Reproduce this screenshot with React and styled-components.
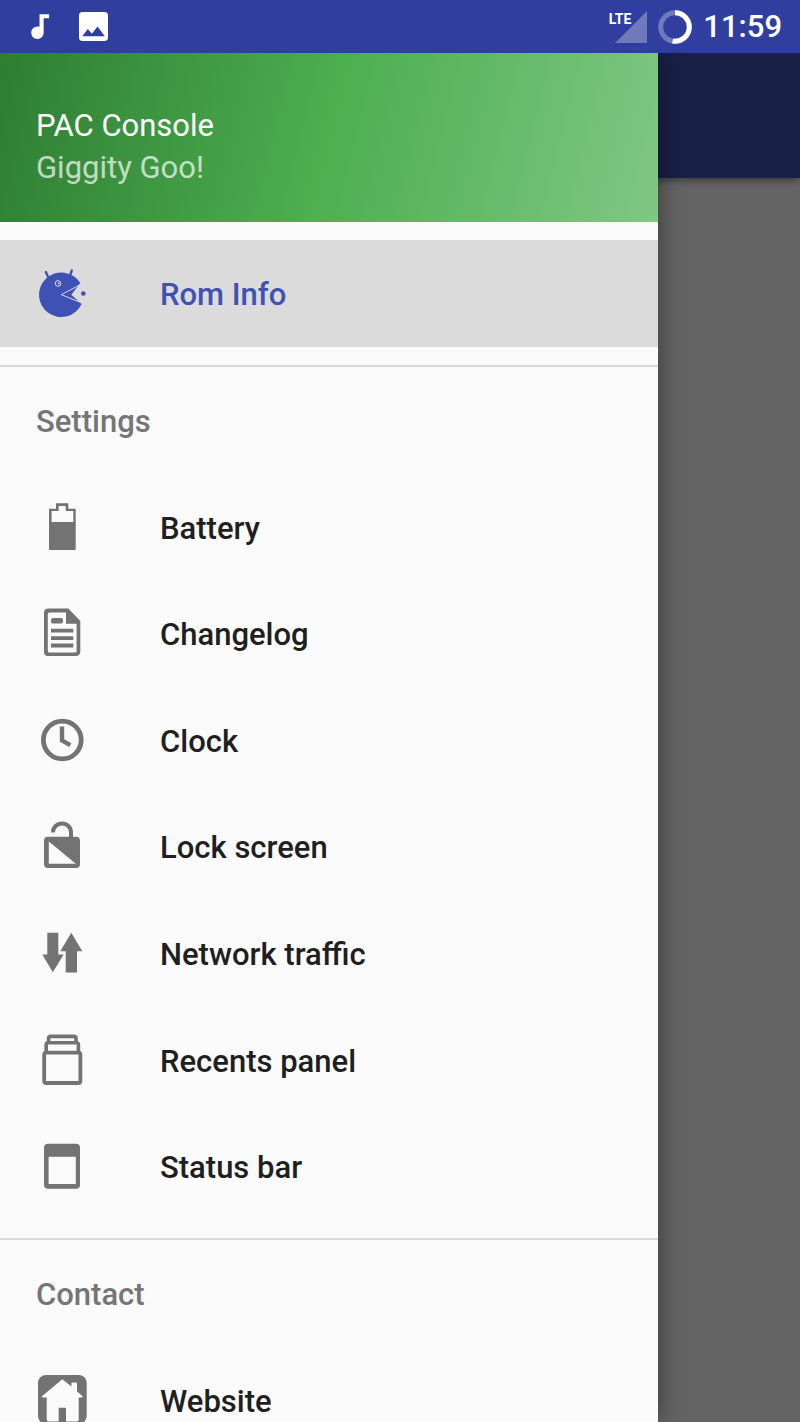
import React from "react";
import styled, { createGlobalStyle } from "styled-components";

const Global = createGlobalStyle`
  *, *::before, *::after { box-sizing: border-box; }
  body { margin: 0; font-family: Roboto, "Liberation Sans", sans-serif; }
`;

const Screen = styled.div`
  display: flex;
  flex-direction: column;
  height: 100vh;
  overflow: hidden;
  background: #646464;
`;

const StatusBar = styled.header`
  flex: none;
  display: flex;
  align-items: center;
  justify-content: space-between;
  height: 53px;
  padding: 0 18px 0 23px;
  background: #303f9f;
  color: #fff;
`;

const StatusGroup = styled.div`
  display: flex;
  align-items: center;
  gap: ${(p) => p.$gap}px;
`;

const Signal = styled.div`
  display: flex;
  align-items: flex-start;
`;

const NetworkType = styled.span`
  margin-right: -16px;
  font-size: 14px;
  font-weight: 700;
  line-height: 16px;
`;

const Time = styled.time`
  font-size: 31px;
  font-weight: 500;
  line-height: 38px;
`;

const Stage = styled.div`
  position: relative;
  flex: 1;
  min-height: 0;
  display: flex;
  flex-direction: column;
  overflow: hidden;
`;

const Toolbar = styled.div`
  flex: none;
  height: 125px;
  background: #192046;
  box-shadow: 0 2px 8px rgba(0, 0, 0, 0.45);
`;

const Drawer = styled.aside`
  position: absolute;
  inset: 0 142px 0 0;
  overflow: hidden;
  background: #fafafa;
  box-shadow: 0 0 24px rgba(0, 0, 0, 0.45);
`;

const DrawerHeader = styled.div`
  display: flex;
  flex-direction: column;
  justify-content: flex-end;
  height: 169px;
  padding: 0 36px 33px;
  background: linear-gradient(104deg, #2e7d32, #4caf50 50%, #81c784);
  color: #fff;
  font-size: 31px;
  line-height: 42px;
`;

const Title = styled.div``;

const Subtitle = styled.div`
  color: rgba(255, 255, 255, 0.7);
`;

const Section = styled.section`
  padding: ${(p) => (p.$first ? 18 : 0)}px 0 18px;
  & + & { border-top: 2px solid #dadada; }
`;

const SectionTitle = styled.h2`
  height: 107px;
  margin: 0;
  padding: 1px 36px 0;
  font-size: 31px;
  font-weight: 500;
  line-height: 107px;
  color: #757575;
`;

const List = styled.ul`
  display: grid;
  grid-auto-rows: 1fr;
  height: ${(p) => p.$height}px;
  margin: 0;
  padding: 0;
  list-style: none;
`;

const Entry = styled.li`
  display: flex;
`;

const ItemLink = styled.a`
  flex: 1;
  display: flex;
  align-items: center;
  gap: 71px;
  padding: 0 36px;
  font-size: 31px;
  font-weight: 500;
  text-decoration: none;
  color: ${(p) => (p.$active ? "#3f51b5" : "#1f1f1f")};
  background: ${(p) => (p.$active ? "#dbdbdb" : "transparent")};
`;

const Label = styled.span`
  padding-top: 2px;
`;

const Glyph = styled.svg`
  flex: none;
  width: 53px;
  height: 53px;
  overflow: visible;
  fill: ${(p) => (p.$active ? "#3f51b5" : "#737373")};
`;

const icons = {
  pac: (
    <>
      <path d="M44.3 16.1 A22.3 22.3 0 1 0 45.6 36.9 L35.3 27.7 Z" />
      <path d="M9.8 5 L12.4 10.5 M35.7 3.5 L34 9" stroke="#3f51b5" strokeWidth="2.4" strokeLinecap="round" />
      <path d="M44 17.8 L25.3 27.7 L44.6 35.4" fill="none" stroke="#dbdbdb" strokeWidth="1" />
      <circle cx="22" cy="16.5" r="2.8" fill="none" stroke="#dbdbdb" strokeWidth="1" />
      <circle cx="22.8" cy="16.5" r="1" fill="#dbdbdb" />
      <circle cx="47.3" cy="26.5" r="2.3" />
    </>
  ),
  battery: (
    <path
      fillRule="evenodd"
      d="M13 7.7H20V2.3H32.3V7.7H39.7V49H13Z M15.6 10V21H37.3V10H29.7V5H22.7V10Z"
    />
  ),
  changelog: (
    <>
      <path
        fillRule="evenodd"
        d="M12.3 1.4H32.3L44.3 13.9V44.9a4.2 4.2 0 0 1-4.2 4.2H12.3A4.2 4.2 0 0 1 8 44.9V5.6A4.2 4.2 0 0 1 12.3 1.4Z M13.5 5.4A1.7 1.7 0 0 0 11.8 7.1V43.9A1.7 1.7 0 0 0 13.5 45.6H39A1.7 1.7 0 0 0 40.6 43.9V16.7H30V5.4Z"
      />
      <rect x="15" y="11" width="12" height="5.4" rx="2" />
      <path d="M15 21.8H37.3V25.6H15Z M15 29.2H37.3V33H15Z M15 36.6H37.3V40.4H15Z" />
    </>
  ),
  clock: (
    <>
      <circle cx="26.3" cy="26" r="18.9" fill="none" stroke="#737373" strokeWidth="4.8" />
      <path d="M26 12.6V26.4L34.3 31.1" fill="none" stroke="#737373" strokeWidth="4.4" />
    </>
  ),
  lock: (
    <>
      <path
        fillRule="evenodd"
        d="M12 16.7H40a4 4 0 0 1 4 4V44.1a4 4 0 0 1-4 4H12a4 4 0 0 1-4-4V20.7a4 4 0 0 1 4-4Z M12.8 21.4V43.8H39.8Z"
      />
      <path d="M17 12.6V12.4A9 9 0 0 1 35 12.4V17.4" fill="none" stroke="#737373" strokeWidth="4" />
    </>
  ),
  traffic: (
    <path d="M11.3 5.8H22.3V27.5H27.7L16.8 45.3L6.3 27.5H11.3Z M35.3 5.8L46.3 24.3H41V45.5H29.7V24.3H24.3Z" />
  ),
  recents: (
    <g fill="none" stroke="#737373" strokeWidth="3.8">
      <rect x="8.2" y="18.6" width="36.2" height="30.4" rx="2" />
      <path d="M10.2 18.2V10.7a2 2 0 0 1 2-2H40.4a2 2 0 0 1 2 2V18.2" strokeWidth="3.6" />
      <path d="M12.6 9.2V4.4a2 2 0 0 1 2-2H38a2 2 0 0 1 2 2V9.2" strokeWidth="3.6" />
    </g>
  ),
  status: (
    <path
      fillRule="evenodd"
      d="M12 3.8H40a4 4 0 0 1 4 4V44.8a4 4 0 0 1-4 4H12a4 4 0 0 1-4-4V7.8a4 4 0 0 1 4-4Z M12.6 16.8V44H39.8V16.8Z"
    />
  ),
  website: (
    <>
      <rect x="2" y="1" width="48.7" height="49" rx="8" />
      <path
        fill="#fafafa"
        d="M26.3 5.3L35.4 12.6V9.5a1 1 0 0 1 1-1H40a1 1 0 0 1 1 1V17.6L46.9 22.6L46 23.6H42.7V45.5a2 2 0 0 1-2 2H30V33.7H22.7V47.5H12.7a2 2 0 0 1-2-2V23.6H6.6L5.7 22.6Z"
      />
    </>
  ),
};

const settings = [
  ["battery", "Battery"],
  ["changelog", "Changelog"],
  ["clock", "Clock"],
  ["lock", "Lock screen"],
  ["traffic", "Network traffic"],
  ["recents", "Recents panel"],
  ["status", "Status bar"],
];

function Item({ icon, label, active }) {
  return (
    <Entry>
      <ItemLink href={`#${icon}`} $active={active} aria-current={active ? "page" : undefined}>
        <Glyph viewBox="0 0 53 53" $active={active} aria-hidden="true">
          {icons[icon]}
        </Glyph>
        <Label>{label}</Label>
      </ItemLink>
    </Entry>
  );
}

export default function App() {
  return (
    <Screen>
      <Global />
      <StatusBar>
        <StatusGroup $gap={23}>
          <svg width="33" height="33" viewBox="0 0 24 24" fill="#fff" aria-hidden="true">
            <path d="M12 3v9.28c-.47-.17-.97-.28-1.5-.28C8.01 12 6 14.01 6 16.5S8.01 21 10.5 21c2.31 0 4.2-1.75 4.45-4H15V6h4V3h-7z" />
          </svg>
          <svg width="29" height="29" viewBox="3 3 18 18" fill="#fff" aria-hidden="true">
            <path d="M21 19V5c0-1.1-.9-2-2-2H5c-1.1 0-2 .9-2 2v14c0 1.1.9 2 2 2h14c1.1 0 2-.9 2-2zM8.5 13.5l2.5 3.01L14.5 12l4.5 6H5l3.5-4.5z" />
          </svg>
        </StatusGroup>
        <StatusGroup $gap={11}>
          <Signal>
            <NetworkType>LTE</NetworkType>
            <svg width="32" height="32" viewBox="0 0 32 32" aria-hidden="true">
              <path d="M32 0V32H0Z" fill="#7079bc" />
            </svg>
          </Signal>
          <svg width="34" height="34" viewBox="0 0 34 34" fill="none" strokeWidth="5" aria-hidden="true">
            <circle cx="17" cy="17" r="14.3" stroke="#7079bc" />
            <path d="M17 2.7A14.3 14.3 0 1 1 14.6 31.1" stroke="#fff" />
          </svg>
          <Time>11:59</Time>
        </StatusGroup>
      </StatusBar>
      <Stage>
        <Toolbar />
        <Drawer>
          <DrawerHeader>
            <Title>PAC Console</Title>
            <Subtitle>Giggity Goo!</Subtitle>
          </DrawerHeader>
          <nav>
            <Section $first>
              <List $height={107}>
                <Item icon="pac" label="Rom Info" active />
              </List>
            </Section>
            <Section>
              <SectionTitle>Settings</SectionTitle>
              <List $height={746}>
                {settings.map(([icon, label]) => (
                  <Item key={icon} icon={icon} label={label} />
                ))}
              </List>
            </Section>
            <Section>
              <SectionTitle>Contact</SectionTitle>
              <List $height={107}>
                <Item icon="website" label="Website" />
              </List>
            </Section>
          </nav>
        </Drawer>
      </Stage>
    </Screen>
  );
}
